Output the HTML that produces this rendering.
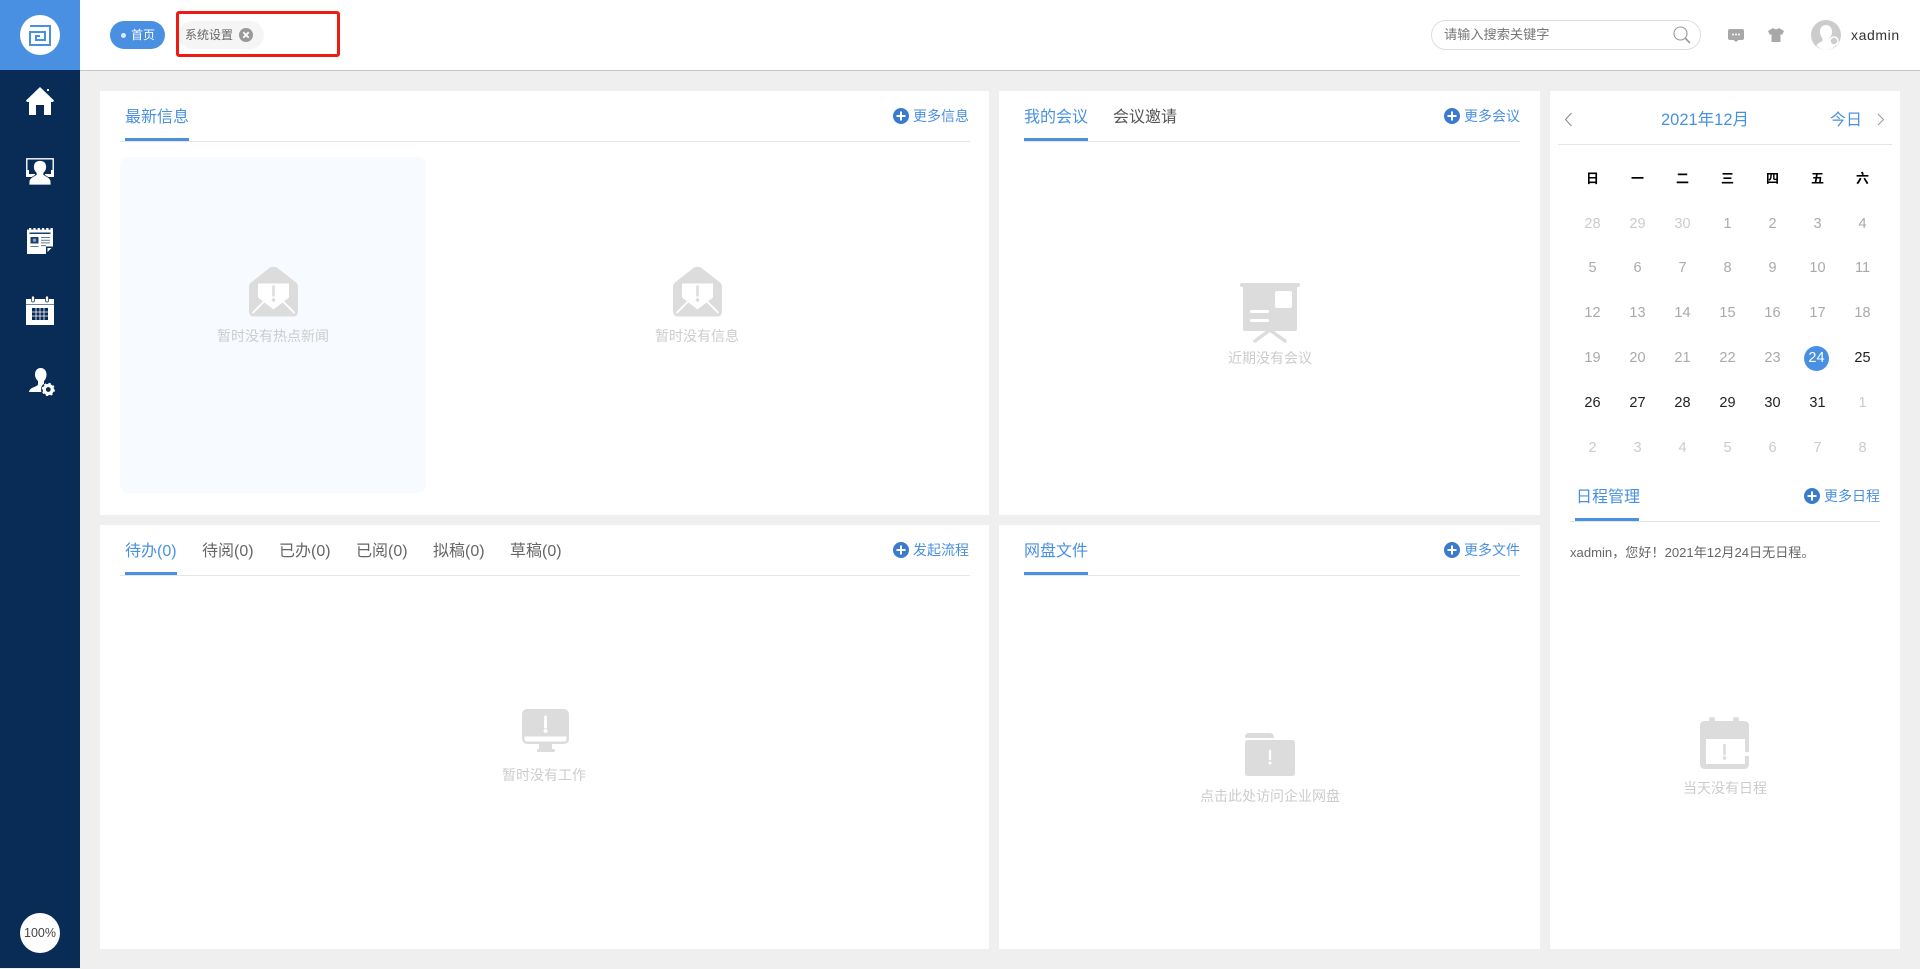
<!DOCTYPE html>
<html lang="zh"><head><meta charset="utf-8"><title>首页</title>
<style>
html,body{margin:0;padding:0;width:1920px;height:969px;overflow:hidden;background:#efefef;font-family:"Liberation Sans","Noto Sans CJK SC",sans-serif}
.a,.t,svg{position:absolute}
.t{white-space:nowrap;line-height:20px;height:20px}
.c{transform:translateX(-50%)}
.tab{font-size:16px;color:#666}
.on{color:#4a90e2}
.more{font-size:14px;color:#4a90e2}
.e{font-size:14px;color:#ccc}
.bar{position:absolute;height:3px;background:#4a90e2}
.ln{position:absolute;height:1px;background:#e5e5e5}
.p{position:absolute;background:#fff}
.d{position:absolute;width:45px;text-align:center;font-size:14.5px;line-height:20px;height:20px;color:#aaa}
.l{color:#ccc}.k{color:#222}
.w{position:absolute;width:45px;text-align:center;font-size:13px;line-height:20px;color:#000;font-weight:bold}
</style></head><body>
<svg width="0" height="0" style="position:absolute"><defs>
<g id="plus"><circle cx="8" cy="8" r="8" fill="#3a7bcd"/><path d="M8 3.500v9M3.500 8h9" stroke="#fff" stroke-width="2"/></g>
<g id="env"><path d="M2 16 21 1q3.500-1.500 7 0L47 16q2 2 2 4v25q0 5-5 5H5q-5 0-5-5V20q0-2 2-4z" fill="#dcdcdc"/><path d="M9 17h31v14L24.500 43 9 31z" fill="#fff"/><path d="M24.500 20v9" stroke="#dcdcdc" stroke-width="2.600" stroke-linecap="round"/><circle cx="24.500" cy="33.500" r="1.800" fill="#dcdcdc"/><path d="M4 46l11-11M45 46 34 35" stroke="#fff" stroke-width="1.800" stroke-linecap="round"/></g>
</defs></svg>

<!-- header -->
<div class="a" style="left:0;top:0;width:1920px;height:70px;background:#fff;border-bottom:1px solid #c4c4c4"></div>
<!-- sidebar -->
<div class="a" style="left:0;top:0;width:80px;height:968px;background:#092c57"></div>
<div class="a" style="left:0;top:0;width:80px;height:70px;background:#4a90e2"></div>
<div class="a" style="left:20px;top:15px;width:40px;height:40px;border-radius:50%;background:#fff"></div>
<svg style="left:29px;top:24px" width="22" height="22" viewBox="0 0 22 22" fill="none" stroke="#4a90e2" stroke-width="2"><path d="M1 2H21V21H1V8H16V16H7V12H11"/></svg>

<!-- sidebar icons -->
<svg style="left:26px;top:86px" width="28" height="29" viewBox="0 0 28 29" fill="#fff"><path d="M14 1 28 14.500l-1 1.500H25v13h-7V19h-8v10H3V16H1L0 14.500z"/><rect x="21" y="3" width="2" height="2"/></svg>
<svg style="left:26px;top:158px" width="28" height="27" viewBox="0 0 28 27"><rect x=".8" y=".8" width="26.400" height="17.500" fill="none" stroke="#fff" stroke-width="1.400"/><path d="M0 12h3v4h6v3H0zM28 12h-3v4h-6v3h9z" fill="#fff"/><path d="M14 2.500c4.500 0 6.500 3 6.500 6.500 0 2.500-1.200 4.500-2.800 6v1.500c1.500 1.500 6 2.500 7 6 .2 1 .3 4.500.3 4.500H3s.1-3.500.3-4.500c1-3.500 5.500-4.500 7-6V15c-1.600-1.500-2.800-3.500-2.800-6 0-3.500 2-6.500 6.500-6.500z" fill="#fff" stroke="#092c57" stroke-width=".7"/></svg>
<svg style="left:27px;top:228px" width="26" height="26" viewBox="0 0 26 26"><path d="M0 0h26v18.500L18.500 26H0z" fill="#fff"/><path d="M0 .8h26" stroke="#092c57" stroke-width="1.600" stroke-dasharray="2 2.300"/><path d="M2.500 4.500h21v1.500h-21z" fill="#1b3f6d"/><rect x="3.500" y="9" width="8" height="6.500" fill="#1b3f6d"/><circle cx="7.500" cy="12.200" r="1.700" fill="#8aa0ba"/><path d="M14 9h9v1h-9zM14 11.700h9v1h-9zM14 14.400h9v1h-9zM14 17.100h5v1h-5zM3.500 18h8v1h-8z" fill="#5d7a9c"/><path d="M26 18.500h-7V26z" fill="#092c57"/><path d="M24.500 20h-4v4z" fill="#fff"/></svg>
<svg style="left:26px;top:296px" width="28" height="29" viewBox="0 0 28 29"><path d="M0 3h28v26H0z" fill="#fff"/><rect x="5.500" y="0" width="3" height="6" rx="1.200" fill="#fff" stroke="#092c57" stroke-width=".7"/><rect x="19.500" y="0" width="3" height="6" rx="1.200" fill="#fff" stroke="#092c57" stroke-width=".7"/><path d="M0 8h28v.8H0z" fill="#3f5e85"/><path d="M6 12h16v12H6z" fill="#092c57"/><path d="M10 12v12M14 12v12M18 12v12M6 16h16M6 20h16" stroke="#fff" stroke-width=".8"/></svg>
<svg style="left:29px;top:368px" width="26" height="28" viewBox="0 0 26 28"><path d="M11.500 0c4 0 6 3 6 6.500 0 3-1 5-2.500 6.500v2.500c0 .8 1 1.500 2 2.200-2 1.600-3.500 3.500-3 6.300H0c.5-2.500 1.800-3.500 4-4.500 3-1.200 5-2 5-3.500V13C7.500 11.500 6 9.500 6 6.500 6 3 8 0 11.500 0z" fill="#fff"/><circle cx="19.300" cy="21.500" r="7.300" fill="#092c57"/><circle cx="19.300" cy="21.500" r="4" fill="none" stroke="#fff" stroke-width="3.200"/><circle cx="19.300" cy="21.500" r="5.900" fill="none" stroke="#fff" stroke-width="1.400" stroke-dasharray="2.300 2.330"/></svg>
<div class="a" style="left:20px;top:913px;width:40px;height:40px;border-radius:50%;background:#fff;font-size:12.500px;line-height:41px;text-align:center;color:#444">100%</div>

<!-- header tabs -->
<div class="a" style="left:110px;top:21px;width:55px;height:28px;border-radius:14px;background:#4a90e2"></div>
<div class="a" style="left:120.500px;top:32.500px;width:5px;height:5px;border-radius:50%;background:#dcebfb"></div>
<div class="t" style="left:131px;top:25px;font-size:12px;color:#fff">首页</div>
<div class="a" style="left:178px;top:21px;width:86px;height:28px;border-radius:14px;background:#f5f5f5"></div>
<div class="t" style="left:185px;top:25px;font-size:12px;color:#666">系统设置</div>
<svg style="left:239px;top:28px" width="14" height="14" viewBox="0 0 14 14"><circle cx="7" cy="7" r="7" fill="#999"/><path d="M4.300 4.300l5.400 5.400M9.700 4.300l-5.400 5.400" stroke="#fff" stroke-width="1.800"/></svg>
<div class="a" style="left:176px;top:11px;width:158px;height:40px;border:3px solid #f01a12;border-radius:3px"></div>

<!-- header right -->
<div class="a" style="left:1431px;top:20px;width:268px;height:28px;border:1px solid #ddd;border-radius:15px;background:#fff"></div>
<div class="t" style="left:1444px;top:25px;font-size:13.200px;color:#777">请输入搜索关键字</div>
<svg style="left:1673px;top:26px" width="18" height="18" viewBox="0 0 18 18" fill="none" stroke="#999"><circle cx="7.500" cy="7.500" r="6.500" stroke-width="1.100"/><path d="M12.500 12.500l4.500 4.500" stroke-width="1.600"/></svg>
<svg style="left:1728px;top:29px" width="16" height="13" viewBox="0 0 16 13"><path d="M2 0h12q2 0 2 2v7q0 2-2 2h-3.500L8 13l-2.500-2H2q-2 0-2-2V2q0-2 2-2z" fill="#a8a8a8"/><circle cx="5" cy="5.500" r="1" fill="#fff"/><circle cx="8" cy="5.500" r="1" fill="#fff"/><circle cx="11" cy="5.500" r="1" fill="#fff"/></svg>
<svg style="left:1768px;top:28px" width="16" height="14" viewBox="0 0 16 14"><path d="M5 0 0 3l2 4 1.500-1V14h9V6l1.500 1 2-4-5-3q-3 2.500-6 0z" fill="#a8a8a8"/></svg>
<svg style="left:1811px;top:20px" width="30" height="30" viewBox="0 0 30 30"><circle cx="15" cy="15" r="15" fill="#ccc"/><path d="M15 5c4 0 6 3 6 7 0 3-1.500 5-2.500 6v2.500c1.500 2 5 2.500 6 5Q20.500 30 15 30T5.500 25.500c1-2.500 4.500-3 6-5V18c-1-1-2.500-3-2.500-6 0-4 2-7 6-7z" fill="#fff"/><circle cx="23" cy="21" r="4" fill="#ccc" stroke="#fff" stroke-width="1.500"/></svg>
<div class="t" style="left:1851px;top:25px;font-size:14px;color:#333;letter-spacing:.6px">xadmin</div>

<!-- panels -->
<div class="p" style="left:100px;top:91px;width:889px;height:424px"></div>
<div class="p" style="left:999px;top:91px;width:541px;height:424px"></div>
<div class="p" style="left:100px;top:525px;width:889px;height:424px"></div>
<div class="p" style="left:999px;top:525px;width:541px;height:424px"></div>
<div class="p" style="left:1550px;top:91px;width:350px;height:858px"></div>

<!-- panel 1 -->
<div class="t tab on" style="left:125px;top:108px">最新信息</div>
<div class="bar" style="left:125px;top:138px;width:64px"></div>
<div class="ln" style="left:120px;top:141px;width:850px"></div>
<svg style="left:893px;top:108px" width="16" height="16"><use href="#plus"/></svg>
<div class="t more" style="left:913px;top:106px">更多信息</div>
<div class="a" style="left:120px;top:157px;width:306px;height:336px;background:#f7faff;border-radius:8px"></div>
<svg style="left:249px;top:266px" width="49" height="51" viewBox="0 0 49 50"><use href="#env"/></svg>
<svg style="left:673px;top:266px" width="49" height="51" viewBox="0 0 49 50"><use href="#env"/></svg>
<div class="t e c" style="left:273px;top:326px">暂时没有热点新闻</div>
<div class="t e c" style="left:697px;top:326px">暂时没有信息</div>

<!-- panel 2 -->
<div class="t tab on" style="left:1024px;top:108px">我的会议</div>
<div class="t tab" style="left:1113px;top:108px;color:#555">会议邀请</div>
<div class="bar" style="left:1024px;top:138px;width:64px"></div>
<div class="ln" style="left:1024px;top:141px;width:496px"></div>
<svg style="left:1444px;top:108px" width="16" height="16"><use href="#plus"/></svg>
<div class="t more" style="left:1464px;top:106px">更多会议</div>
<svg style="left:1240px;top:283px" width="60" height="60" viewBox="0 0 60 60"><rect x="0" y="0" width="60" height="4" rx="2" fill="#dcdcdc"/><path d="M3 3h54v43q0 2-2 2H5q-2 0-2-2z" fill="#dcdcdc"/><rect x="35" y="8" width="17" height="17" rx="2" fill="#fff"/><rect x="10" y="27" width="19" height="3" rx="1.500" fill="#fff"/><rect x="10" y="36" width="19" height="3" rx="1.500" fill="#fff"/><path d="M30 47 15 58M30 47 45 58" stroke="#dcdcdc" stroke-width="3.500" stroke-linecap="round"/></svg>
<div class="t e c" style="left:1270px;top:348px">近期没有会议</div>

<!-- panel 3 -->
<div class="t tab on" style="left:125px;top:542px">待办(0)</div>
<div class="t tab" style="left:202px;top:542px">待阅(0)</div>
<div class="t tab" style="left:279px;top:542px">已办(0)</div>
<div class="t tab" style="left:356px;top:542px">已阅(0)</div>
<div class="t tab" style="left:433px;top:542px">拟稿(0)</div>
<div class="t tab" style="left:510px;top:542px">草稿(0)</div>
<div class="bar" style="left:125px;top:572px;width:52px"></div>
<div class="ln" style="left:120px;top:575px;width:850px"></div>
<svg style="left:893px;top:542px" width="16" height="16"><use href="#plus"/></svg>
<div class="t more" style="left:913px;top:540px">发起流程</div>
<svg style="left:522px;top:709px" width="47" height="43" viewBox="0 0 47 43"><rect width="47" height="35" rx="5" fill="#dcdcdc"/><path d="M2.500 27.500h42v2.500q0 2.500-2.500 2.500H5q-2.500 0-2.500-2.500z" fill="#fff"/><path d="M17 35h13v5h-13z" fill="#dcdcdc"/><rect x="15" y="40" width="18" height="3" rx="1.500" fill="#dcdcdc"/><path d="M23.500 8v10" stroke="#fff" stroke-width="3" stroke-linecap="round"/><circle cx="23.500" cy="22" r="2" fill="#fff"/></svg>
<div class="t e c" style="left:544px;top:765px">暂时没有工作</div>

<!-- panel 4 -->
<div class="t tab on" style="left:1024px;top:542px">网盘文件</div>
<div class="bar" style="left:1024px;top:572px;width:64px"></div>
<div class="ln" style="left:1024px;top:575px;width:496px"></div>
<svg style="left:1444px;top:542px" width="16" height="16"><use href="#plus"/></svg>
<div class="t more" style="left:1464px;top:540px">更多文件</div>
<svg style="left:1245px;top:733px" width="50" height="43" viewBox="0 0 50 43"><path d="M0 4q0-4 4-4h21q4 0 4 5H0z" fill="#dcdcdc"/><path d="M0 10q0-3 3-3h44q3 0 3 3v30q0 3-3 3H3q-3 0-3-3z" fill="#dcdcdc"/><path d="M25 18v8" stroke="#fff" stroke-width="2.400" stroke-linecap="round"/><circle cx="25" cy="30" r="1.500" fill="#fff"/></svg>
<div class="t e c" style="left:1270px;top:786px">点击此处访问企业网盘</div>

<!-- calendar -->
<svg style="left:1564px;top:112px" width="9" height="15" viewBox="0 0 9 15" fill="none" stroke="#888" stroke-width="1"><path d="M7.500 1 1.500 7.500l6 6.500"/></svg>
<div class="t on c" style="left:1705px;top:110px;font-size:16.500px">2021年12月</div>
<div class="t on" style="left:1830px;top:111px;font-size:16px">今日</div>
<svg style="left:1877px;top:113px" width="8" height="13" viewBox="0 0 8 13" fill="none" stroke="#999" stroke-width="1"><path d="M1 1l5.500 5.500L1 12"/></svg>
<div class="ln" style="left:1558px;top:144px;width:334px"></div>

<div class="w" style="left:1570px;top:169px">日</div><div class="w" style="left:1615px;top:169px">一</div><div class="w" style="left:1660px;top:169px">二</div><div class="w" style="left:1705px;top:169px">三</div><div class="w" style="left:1750px;top:169px">四</div><div class="w" style="left:1795px;top:169px">五</div><div class="w" style="left:1840px;top:169px">六</div>

<div class="d l" style="left:1570px;top:214px">28</div><div class="d l" style="left:1615px;top:214px">29</div><div class="d l" style="left:1660px;top:214px">30</div><div class="d" style="left:1705px;top:214px">1</div><div class="d" style="left:1750px;top:214px">2</div><div class="d" style="left:1795px;top:214px">3</div><div class="d" style="left:1840px;top:214px">4</div>
<div class="d" style="left:1570px;top:258px">5</div><div class="d" style="left:1615px;top:258px">6</div><div class="d" style="left:1660px;top:258px">7</div><div class="d" style="left:1705px;top:258px">8</div><div class="d" style="left:1750px;top:258px">9</div><div class="d" style="left:1795px;top:258px">10</div><div class="d" style="left:1840px;top:258px">11</div>
<div class="d" style="left:1570px;top:303px">12</div><div class="d" style="left:1615px;top:303px">13</div><div class="d" style="left:1660px;top:303px">14</div><div class="d" style="left:1705px;top:303px">15</div><div class="d" style="left:1750px;top:303px">16</div><div class="d" style="left:1795px;top:303px">17</div><div class="d" style="left:1840px;top:303px">18</div>
<div class="d" style="left:1570px;top:348px">19</div><div class="d" style="left:1615px;top:348px">20</div><div class="d" style="left:1660px;top:348px">21</div><div class="d" style="left:1705px;top:348px">22</div><div class="d" style="left:1750px;top:348px">23</div>
<div class="a" style="left:1804px;top:345.500px;width:25px;height:25px;border-radius:50%;background:#4a90e2"></div>
<div class="d" style="left:1794px;top:348px;color:#fff">24</div><div class="d k" style="left:1840px;top:348px">25</div>
<div class="d k" style="left:1570px;top:393px">26</div><div class="d k" style="left:1615px;top:393px">27</div><div class="d k" style="left:1660px;top:393px">28</div><div class="d k" style="left:1705px;top:393px">29</div><div class="d k" style="left:1750px;top:393px">30</div><div class="d k" style="left:1795px;top:393px">31</div><div class="d l" style="left:1840px;top:393px">1</div>
<div class="d l" style="left:1570px;top:438px">2</div><div class="d l" style="left:1615px;top:438px">3</div><div class="d l" style="left:1660px;top:438px">4</div><div class="d l" style="left:1705px;top:438px">5</div><div class="d l" style="left:1750px;top:438px">6</div><div class="d l" style="left:1795px;top:438px">7</div><div class="d l" style="left:1840px;top:438px">8</div>

<div class="t tab on" style="left:1576px;top:488px">日程管理</div>
<div class="bar" style="left:1575px;top:518px;width:64px"></div>
<div class="ln" style="left:1570px;top:521px;width:310px"></div>
<svg style="left:1804px;top:488px" width="16" height="16"><use href="#plus"/></svg>
<div class="t more" style="left:1824px;top:486px">更多日程</div>
<div class="t" style="left:1570px;top:543px;font-size:13.100px;color:#666">xadmin，您好！2021年12月24日无日程。</div>
<svg style="left:1700px;top:717px" width="49" height="52" viewBox="0 0 49 52"><path d="M5 4h4V2q0-2 3-2t3 2v2h18V2q0-2 3-2t3 2v2h5q5 0 5 5v38q0 5-5 5H5q-5 0-5-5V9q0-5 5-5z" fill="#dcdcdc"/><path d="M6 22h39v25H6z" fill="#fff"/><rect x="45" y="35" width="4" height="4" fill="#fff"/><path d="M24.500 28v9" stroke="#dcdcdc" stroke-width="2.600" stroke-linecap="round"/><circle cx="24.500" cy="41" r="1.800" fill="#dcdcdc"/></svg>
<div class="t e c" style="left:1725px;top:778px">当天没有日程</div>
</body></html>
